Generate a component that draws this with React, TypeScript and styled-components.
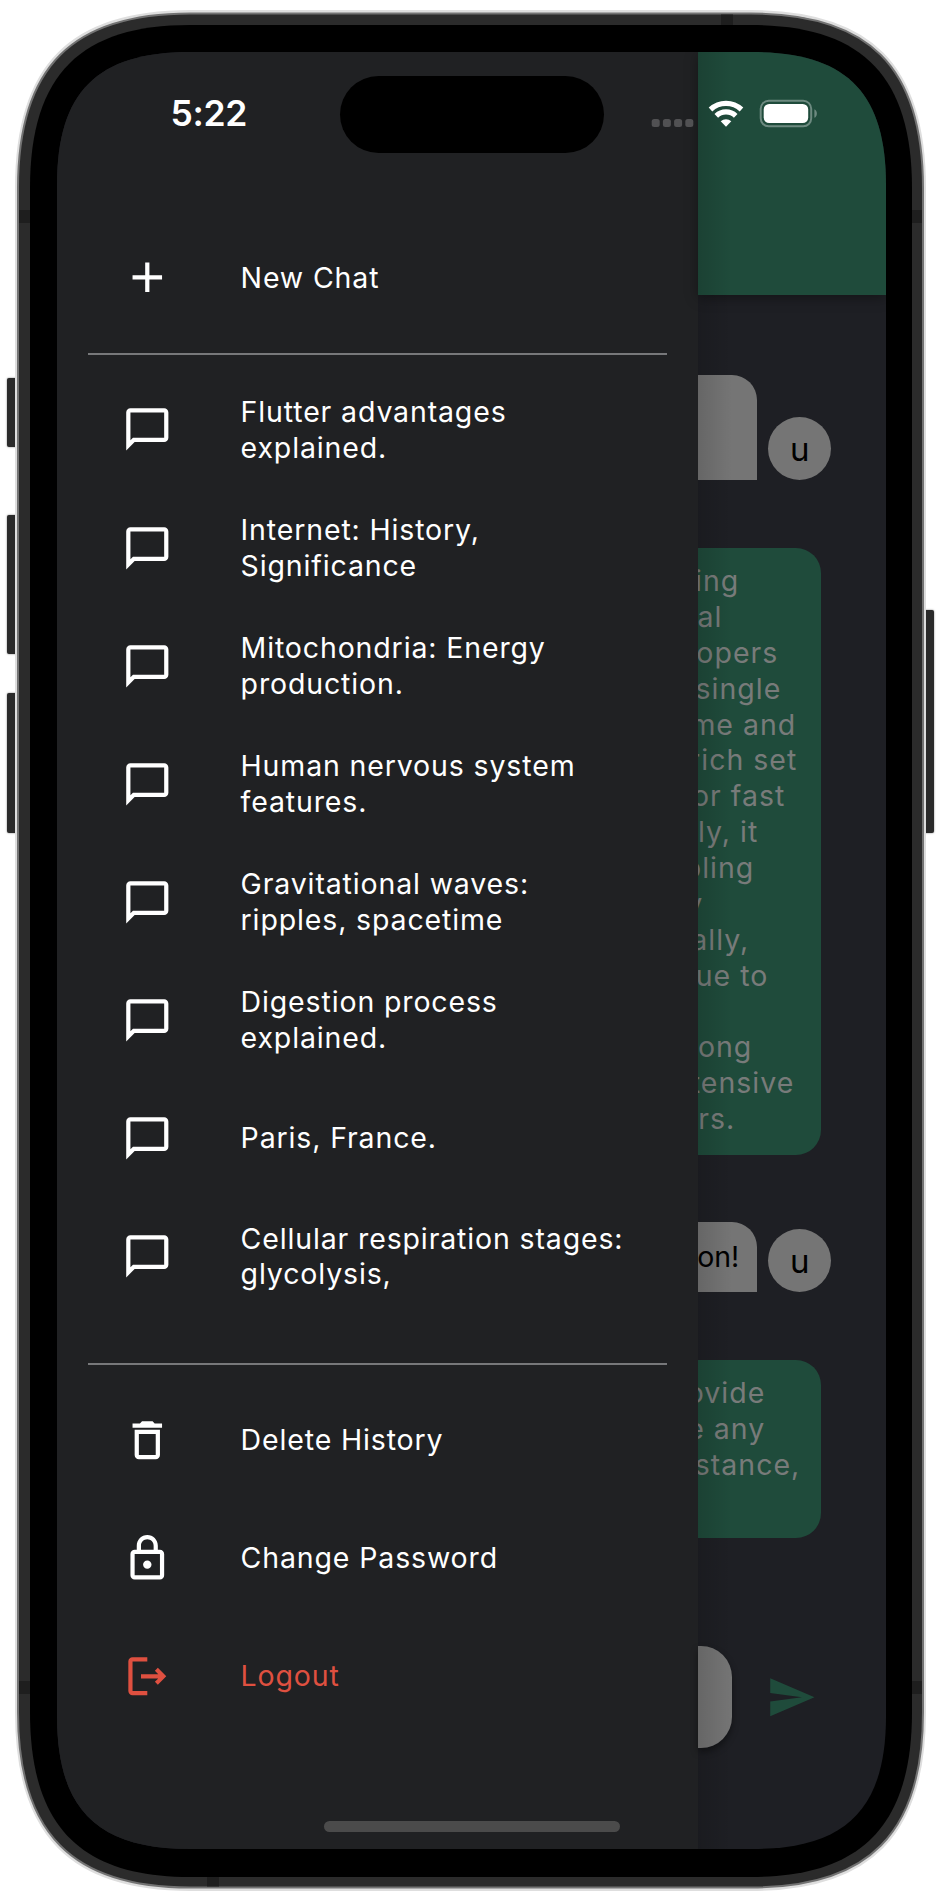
import React from "react";
import styled, { createGlobalStyle } from "styled-components";

const Global = createGlobalStyle`
  * { box-sizing: border-box; }
  body { margin: 0; background: #fff; font-family: Inter, "Liberation Sans", sans-serif; }
`;

const Stage = styled.main`
  position: relative;
  width: 938px;
  height: 1894px;
  overflow: hidden;
`;

const SideButton = styled.div<{ $side: "left" | "right"; $top: number; $height: number }>`
  position: absolute;
  ${(p) => (p.$side === "left" ? "left: 7px;" : "right: 4px;")}
  top: ${(p) => p.$top}px;
  width: 13px;
  height: ${(p) => p.$height}px;
  border-radius: 2px;
  background: #2a2a2a;
  box-shadow: 0 0 2px #777;
`;

const Svg = styled.svg`
  display: block;
  flex: none;
`;

const FrameArt = styled.svg`
  position: absolute;
  inset: 0;
`;

const Screen = styled.div`
  position: absolute;
  left: 57px;
  top: 52px;
  width: 829px;
  height: 1797px;
  overflow: hidden;
  display: flex;
  background: #1e1f24;
  clip-path: path("M0 133 C0 40 40 0 133 0 H696 C789 0 829 40 829 133 V1664 C829 1757 789 1797 696 1797 H133 C40 1797 0 1757 0 1664 Z");
`;

const Drawer = styled.aside`
  width: 641px;
  height: 100%;
  flex: none;
  background: #202123;
  color: #fff;
  padding: 166.5px 31px 0;
  display: flex;
  flex-direction: column;
`;

const Row = styled.div<{ $danger?: boolean }>`
  height: 118.1px;
  flex: none;
  display: flex;
  align-items: center;
  padding-left: 34.1px;
  gap: 67.9px;
  color: ${(p) => (p.$danger ? "#df5040" : "#fff")};
`;

const Label = styled.div`
  font-size: 28.5px;
  line-height: 35.86px;
  font-weight: 430;
  letter-spacing: 0.86px;
  white-space: pre;
`;

const Rule = styled.hr`
  width: 100%;
  height: 2px;
  flex: none;
  margin: 0;
  border: 0;
  background: #77787a;
`;

const NewChat = styled.div`
  height: 134.500px;
  flex: none;
`;

const History = styled.div`
  padding: 15.7px 0 0;
  height: 1008px;
  flex: none;
`;

const Actions = styled.div`
  padding-top: 16px;
`;

const Page = styled.section`
  flex: 1;
  min-width: 0;
  height: 100%;
  position: relative;
  display: flex;
  flex-direction: column;
`;

const Shade = styled.div`
  position: absolute;
  inset: 0 auto 0 0;
  width: 34px;
  background: linear-gradient(90deg, rgba(0, 0, 0, 0.13), rgba(0, 0, 0, 0));
`;

const AppBar = styled.header`
  height: 242.5px;
  flex: none;
  background: #1f4b3b;
  box-shadow: 0 3px 12px rgba(0, 0, 0, 0.35);
`;

const Thread = styled.div`
  flex: 1;
  padding: 80px 0 0;
`;

const Mine = styled.div<{ $height: number }>`
  display: flex;
  align-items: flex-end;
  gap: 10.7px;
  height: ${(p) => p.$height}px;
  margin-bottom: 67.5px;
`;

const MyBubble = styled.div`
  width: 59.3px;
  height: 100%;
  background: #757575;
  border-radius: 0 25px 0 0;
  color: #000;
  font-size: 28.5px;
  line-height: 36px;
  padding: 17px 18px 0 0;
  display: flex;
  justify-content: flex-end;
  overflow: hidden;
  white-space: nowrap;
`;

const Avatar = styled.div`
  width: 63.3px;
  height: 63.3px;
  border-radius: 50%;
  background: #757575;
  color: #000;
  font-size: 33px;
  line-height: 65px;
  text-align: center;
`;

const Reply = styled.div<{ $height: number }>`
  width: 123px;
  height: ${(p) => p.$height}px;
  margin-bottom: 67.3px;
  background: #1f4b3b;
  border-radius: 0 25px 25px 0;
  padding-top: 15.7px;
  overflow: hidden;
`;

/* The drawer hides the start of each line, so lines are anchored by their right edge. */
const ReplyLine = styled.div<{ $end: number }>`
  width: ${(p) => p.$end + 1.3}px;
  height: 35.86px;
  display: flex;
  justify-content: flex-end;
  overflow: hidden;
  white-space: pre;
  color: #787b7a;
  font-size: 28.5px;
  line-height: 35.86px;
  font-weight: 370;
  letter-spacing: 1px;
`;

const Composer = styled.footer`
  height: 203px;
  flex: none;
  display: flex;
  align-items: flex-start;
  gap: 34px;
`;

const Input = styled.div`
  width: 33.7px;
  height: 101.6px;
  background: #757575;
  border-radius: 0 31px 31px 0;
  box-shadow: 0 4px 7px rgba(0, 0, 0, 0.4);
`;

const SendWrap = styled.div`
  padding-top: 26px;
`;

const StatusBar = styled.div`
  position: absolute;
  inset: 0 0 auto 0;
  height: 124px;
`;

const Clock = styled.div`
  position: absolute;
  left: 113.5px;
  top: 40px;
  font-size: 35.5px;
  line-height: 44px;
  font-weight: 590;
  letter-spacing: -0.35px;
  color: #fff;
`;

const Island = styled.div`
  position: absolute;
  left: 282.5px;
  top: 23.5px;
  width: 264px;
  height: 77.5px;
  border-radius: 39px;
  background: #000;
`;

const StatusArt = styled.svg`
  position: absolute;
  left: 590px;
  top: 40px;
`;

const HomeBar = styled.div`
  position: absolute;
  left: 267px;
  bottom: 17px;
  width: 296px;
  height: 11px;
  border-radius: 6px;
  background: #4b4b4b;
`;

const paths = {
  add: "M19 13h-6v6h-2v-6H5v-2h6V5h2v6h6v2z",
  chat: "M20 2H4c-1.100 0-2 .9-2 2v18l4-4h14c1.100 0 2-.9 2-2V4c0-1.100-.9-2-2-2zm0 14H5.200L4 17.200V4h16v12z",
  trash: "M6 19c0 1.100.9 2 2 2h8c1.100 0 2-.9 2-2V7H6v12zM8 9h8v10H8V9zm7.500-5l-1-1h-5l-1 1H5v2h14V4h-3.500z",
  lock: "M18 8h-1V6c0-2.760-2.240-5-5-5S7 3.240 7 6v2H6c-1.100 0-2 .9-2 2v10c0 1.100.9 2 2 2h12c1.100 0 2-.9 2-2V10c0-1.100-.9-2-2-2zM9 6c0-1.660 1.340-3 3-3s3 1.340 3 3v2H9V6zm9 14H6V10h12v10zm-6-3c1.100 0 2-.9 2-2s-.9-2-2-2-2 .9-2 2 .9 2 2 2z",
  send: "M2 21l21-9L2 3v7l15 2-15 2v7z",
};

type IconName = "add" | "chat" | "trash" | "lock" | "logout";

function Icon({ name }: { name: IconName }) {
  return (
    <Svg width="50.6" height="50.6" viewBox="0 0 24 24" fill="currentColor">
      {name === "logout" ? (
        <>
          <path d="M12 3H5a2 2 0 0 0-2 2v14a2 2 0 0 0 2 2h7v-2H5V5h7z" />
          <path d="M17 8l-1.400 1.400L17.200 11H9v2h8.200l-1.600 1.600L17 16l4-4z" />
        </>
      ) : (
        <path d={paths[name]} />
      )}
    </Svg>
  );
}

const chats = [
  "Flutter advantages\nexplained.",
  "Internet: History,\nSignificance",
  "Mitochondria: Energy\nproduction.",
  "Human nervous system\nfeatures.",
  "Gravitational waves:\nripples, spacetime",
  "Digestion process\nexplained.",
  "Paris, France.",
  "Cellular respiration stages:\nglycolysis,",
];

const firstReply: [string, number][] = [
  ["ing", 40], ["al", 23], ["opers", 79], ["single", 82], ["time and", 97], ["rich set", 98], ["for fast", 86],
  ["ly, it", 59], ["enabling", 55], ["y", 4], ["ally,", 50], ["due to", 69], ["a", 1], ["ong", 53], ["extensive", 95], ["rs.", 36],
];

const secondReply: [string, number][] = [["provide", 66], ["have any", 66], ["stance,", 101]];

function Frame() {
  return (
    <FrameArt width="938" height="1894" viewBox="0 0 938 1894" fill="none">
      <path d="M17 188C17 65 72 12 190 12H751C869 12 924 65 924 188V1712C924 1835 869 1889 751 1889H190C72 1889 17 1835 17 1712Z" stroke="#dedede" strokeWidth="4" />
      <path d="M18 188C18 66 73 13.5 190 13.5H751C868 13.5 923 66 923 188V1712C923 1834 868 1887.500 751 1887.500H190C73 1887.500 18 1834 18 1712Z" fill="#2b2b2b" stroke="#737373" strokeWidth="2" />
      <path d="M19 210h11v13H19zM912 210h10v13h-10zM19 1681h11v13H19zM912 1681h10v13h-10zM721 14.500h12v11h-12zM207 1876h12v10.500h-12z" fill="#1e1e1e" />
      <path d="M30 188C30 73 82 25 190 25H751C859 25 912 73 912 188V1712C912 1828 859 1877 751 1877H190C82 1877 30 1828 30 1712Z" fill="#000" />
    </FrameArt>
  );
}

export default function App() {
  return (
    <Stage>
      <Global />
      <SideButton $side="left" $top={378} $height={69} />
      <SideButton $side="left" $top={515} $height={139} />
      <SideButton $side="left" $top={693} $height={140} />
      <SideButton $side="right" $top={610} $height={223} />
      <Frame />
      <Screen>
        <Drawer>
          <NewChat>
            <Row><Icon name="add" /><Label>New Chat</Label></Row>
          </NewChat>
          <Rule />
          <History>
            {chats.map((c) => <Row key={c}><Icon name="chat" /><Label>{c}</Label></Row>)}
          </History>
          <Rule />
          <Actions>
            <Row><Icon name="trash" /><Label>Delete History</Label></Row>
            <Row><Icon name="lock" /><Label>Change Password</Label></Row>
            <Row $danger><Icon name="logout" /><Label>Logout</Label></Row>
          </Actions>
        </Drawer>
        <Page>
          <AppBar />
          <Thread>
            <Mine $height={105.5}><MyBubble /><Avatar>u</Avatar></Mine>
            <Reply $height={607.4}>
              {firstReply.map(([t, end], i) => <ReplyLine key={i} $end={end}>{t}</ReplyLine>)}
            </Reply>
            <Mine $height={70}><MyBubble>on!</MyBubble><Avatar>u</Avatar></Mine>
            <Reply $height={178}>
              {secondReply.map(([t, end], i) => <ReplyLine key={i} $end={end}>{t}</ReplyLine>)}
            </Reply>
          </Thread>
          <Composer>
            <Input />
            <SendWrap><Svg width="50.6" height="50.6" viewBox="0 0 24 24" fill="#1f4b3b"><path d={paths.send} /></Svg></SendWrap>
          </Composer>
          <Shade />
        </Page>
        <StatusBar>
          <Clock>5:22</Clock>
          <Island />
          <StatusArt width="180" height="60" viewBox="0 0 180 60">
            <g fill="#515153">
              <rect x="4.7" y="27" width="8" height="8" rx="2.5" />
              <rect x="15.9" y="27" width="8" height="8" rx="2.5" />
              <rect x="27.1" y="27" width="8" height="8" rx="2.5" />
              <rect x="38.3" y="27" width="8" height="8" rx="2.5" />
            </g>
            <g fill="none" stroke="#fff" strokeWidth="5.2">
              <path d="M63.500 17.500a22.500 22.500 0 0 1 31 0" />
              <path d="M69.300 23.800a14 14 0 0 1 19.400 0" />
            </g>
            <path d="M73.700 29.300a8 8 0 0 1 10.600 0L79 34.700z" fill="#fff" />
            <rect x="113.7" y="8.8" width="50.5" height="25.500" rx="8" fill="none" stroke="#6d8a80" strokeWidth="2" />
            <rect x="116.7" y="12" width="44.5" height="19" rx="5.5" fill="#fff" />
            <path d="M167.400 17.200c3.300 1.400 3.300 7.200 0 8.600z" fill="#6d8a80" />
          </StatusArt>
        </StatusBar>
        <HomeBar />
      </Screen>
    </Stage>
  );
}
